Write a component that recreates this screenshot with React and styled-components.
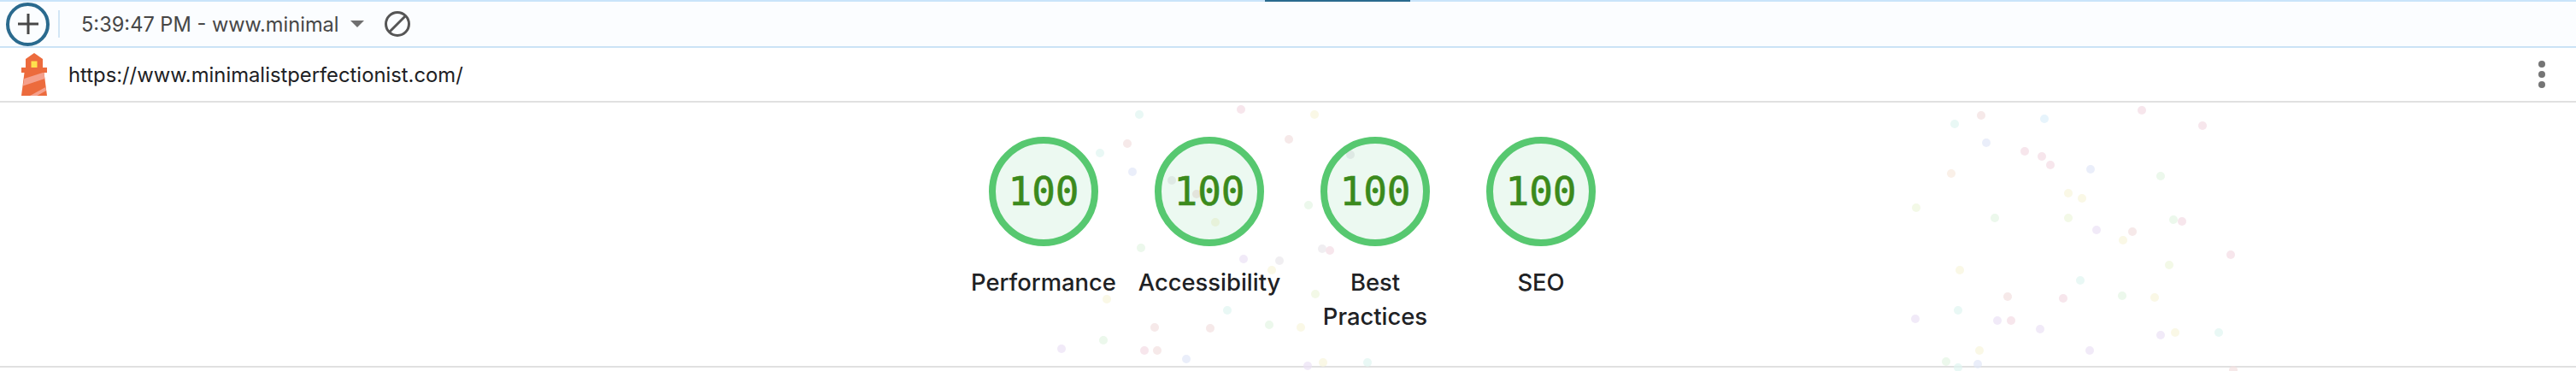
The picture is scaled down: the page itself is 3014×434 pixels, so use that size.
import styled, { createGlobalStyle } from "styled-components";
import { Fragment } from "react";

const GlobalStyle = createGlobalStyle`
  html, body {
    margin: 0;
    padding: 0;
    background: #ffffff;
  }
  body {
    font-family: "Inter", "Liberation Sans", sans-serif;
  }
`;

const Page = styled.div`
  position: relative;
  width: 3014px;
  height: 434px;
  overflow: hidden;
  background: #ffffff;
`;

const Toolbar = styled.div`
  position: relative;
  box-sizing: border-box;
  height: 56px;
  display: flex;
  align-items: center;
  padding-left: 7px;
  background: #fbfdff;
  border-top: 2px solid #c9e4fa;
  border-bottom: 2px solid #cbe3f6;
`;

const ActiveTab = styled.div`
  position: absolute;
  top: -2px;
  left: 1480px;
  width: 170px;
  height: 2px;
  background: #2a6a8e;
`;

const AddButton = styled.button`
  box-sizing: border-box;
  flex: none;
  width: 51px;
  height: 51px;
  margin: 0;
  padding: 0;
  display: flex;
  align-items: center;
  justify-content: center;
  background: transparent;
  border: 4px solid #2a6a8e;
  border-radius: 50%;
  color: #484848;
`;

const Divider = styled.div`
  flex: none;
  width: 2px;
  height: 32px;
  margin: 0 25px 0 10px;
  background: #d3e6f5;
`;

const SessionLabel = styled.span`
  font-size: 23.6px;
  color: #474747;
  white-space: nowrap;
`;

const Caret = styled.div`
  flex: none;
  width: 0;
  height: 0;
  margin: 0 24px 0 13px;
  border-left: 8px solid transparent;
  border-right: 8px solid transparent;
  border-top: 8px solid #6f6f6f;
`;

const UrlRow = styled.div`
  box-sizing: border-box;
  height: 64px;
  display: flex;
  align-items: center;
  padding: 0 36px 0 25px;
  background: #ffffff;
  border-bottom: 2px solid #e0e0e0;
`;

const UrlText = styled.span`
  margin-left: 25px;
  flex: 1;
  font-size: 23.8px;
  color: #202124;
  white-space: nowrap;
`;

const MenuDots = styled.div`
  display: flex;
  flex-direction: column;
  gap: 4px;
`;

const MenuDot = styled.span`
  width: 8px;
  height: 8px;
  border-radius: 50%;
  background: #757575;
`;

const ScoresArea = styled.div`
  position: relative;
  box-sizing: border-box;
  height: 310px;
  padding: 40px 0 0 10px;
  display: flex;
  justify-content: center;
  border-bottom: 2px solid #e0e0e0;
`;

const Confetti = styled.svg`
  position: absolute;
  left: 0;
  top: -120px;
  opacity: 0.7;
  pointer-events: none;
`;

const ScoreItem = styled.div`
  position: relative;
  width: 194px;
  display: flex;
  flex-direction: column;
  align-items: center;
`;

const Gauge = styled.div`
  box-sizing: border-box;
  width: 128px;
  height: 128px;
  display: flex;
  align-items: center;
  justify-content: center;
  border: 8px solid #57c870;
  border-radius: 50%;
  background: rgba(12, 176, 80, 0.08);
  color: #3b8a1c;
  font-family: "DejaVu Sans Mono", "Liberation Mono", monospace;
  font-size: 46px;
  -webkit-text-stroke: 0.6px #3b8a1c;
`;

const ScoreLabel = styled.div`
  margin-top: 22px;
  width: 170px;
  font-size: 27.4px;
  font-weight: 450;
  line-height: 40px;
  text-align: center;
  color: #202124;
`;

const pink = "#f4dce5";
const rose = "#f3e0e0";
const blue = "#e2e8f8";
const sky = "#def0fb";
const teal = "#e0f6f2";
const green = "#e4f6e4";
const lime = "#eff7de";
const yellow = "#f8f6dc";
const tan = "#f8eadf";
const purple = "#ece2f6";
const grey = "#ebe8ec";

const DOTS = [
  [1319, 168, rose], [1287, 179, teal], [1325, 201, blue], [1371, 211, grey],
  [1400, 227, rose], [1333, 134, teal], [1452, 128, pink], [1508, 163, rose],
  [1335, 290, green], [1455, 303, purple], [1497, 305, grey], [1488, 316, yellow],
  [1295, 350, yellow], [1436, 363, teal], [1351, 383, rose], [1416, 384, rose],
  [1485, 380, green], [1291, 398, green], [1242, 408, purple], [1339, 410, pink],
  [1354, 410, rose], [1388, 420, blue], [1422, 260, yellow], [1538, 134, yellow],
  [1580, 181, grey], [1531, 240, green], [1547, 291, grey], [1556, 293, pink],
  [1539, 344, lime], [1522, 383, yellow], [1615, 335, grey], [1530, 428, purple],
  [1548, 424, yellow], [1600, 424, teal],
  [2318, 135, rose], [2287, 145, teal], [2392, 139, sky], [2506, 129, pink],
  [2577, 147, pink], [2324, 167, blue], [2369, 177, pink], [2389, 183, pink],
  [2399, 193, pink], [2446, 198, blue], [2283, 203, tan], [2528, 206, green],
  [2420, 226, yellow], [2436, 232, yellow], [2242, 243, lime], [2334, 255, green],
  [2420, 255, lime], [2543, 257, green], [2553, 259, pink], [2453, 269, purple],
  [2495, 271, rose], [2484, 281, yellow], [2610, 298, pink], [2538, 310, lime],
  [2293, 316, yellow], [2434, 328, teal], [2349, 347, rose], [2414, 349, pink],
  [2483, 346, green], [2521, 348, yellow], [2291, 363, teal], [2241, 373, purple],
  [2337, 375, purple], [2353, 375, pink], [2387, 385, purple], [2528, 392, purple],
  [2545, 389, yellow], [2596, 389, teal], [2445, 410, purple], [2316, 410, yellow],
  [2314, 426, blue], [2277, 423, green], [2291, 430, teal], [2613, 433, rose],
];

const SCORES = ["Performance", "Accessibility", "Best Practices", "SEO"];

const LighthouseLogo = () => (
  <svg width="30" height="50" viewBox="0 0 30 50" style={{ flex: "none" }}>
    <path d="M15 0 L25 7 V17 H5 V7 Z" fill="#ec6b3d" />
    <rect x="0" y="17" width="30" height="6" fill="#ec6b3d" />
    <rect x="11.5" y="9.5" width="7" height="7.5" fill="#ffe14d" />
    <path d="M3.5 23 H26.5 L30 50 H0 Z" fill="#ec6b3d" />
    <path d="M3.3 30 L25 23 H26.5 L27.4 30 L1.9 38.5 Z" fill="#f5a08c" />
    <path d="M10 50 L28.3 40 L29 44 L18.3 50 Z" fill="#f5a08c" />
  </svg>
);

const App = () => (
  <Fragment>
    <GlobalStyle />
    <Page>
      <Toolbar>
        <ActiveTab />
        <AddButton>
          <svg width="24" height="24" viewBox="0 0 24 24">
            <path d="M12 0 V24 M0 12 H24" stroke="currentColor" strokeWidth="3" />
          </svg>
        </AddButton>
        <Divider />
        <SessionLabel>5:39:47 PM - www.minimal</SessionLabel>
        <Caret />
        <svg width="30" height="30" viewBox="0 0 30 30">
          <circle cx="15" cy="15" r="13.5" fill="none" stroke="#555" strokeWidth="3" />
          <path d="M5.5 24.5 L24.5 5.5" stroke="#555" strokeWidth="3" />
        </svg>
      </Toolbar>
      <UrlRow>
        <LighthouseLogo />
        <UrlText>https://www.minimalistperfectionist.com/</UrlText>
        <MenuDots>
          <MenuDot />
          <MenuDot />
          <MenuDot />
        </MenuDots>
      </UrlRow>
      <ScoresArea>
        <Confetti width="3014" height="434" viewBox="0 0 3014 434">
          {DOTS.map(([x, y, color]) => (
            <circle key={`${x}-${y}`} cx={x} cy={y} r="5" fill={color} />
          ))}
        </Confetti>
        {SCORES.map((label) => (
          <ScoreItem key={label}>
            <Gauge>100</Gauge>
            <ScoreLabel>{label}</ScoreLabel>
          </ScoreItem>
        ))}
      </ScoresArea>
    </Page>
  </Fragment>
);

export default App;
